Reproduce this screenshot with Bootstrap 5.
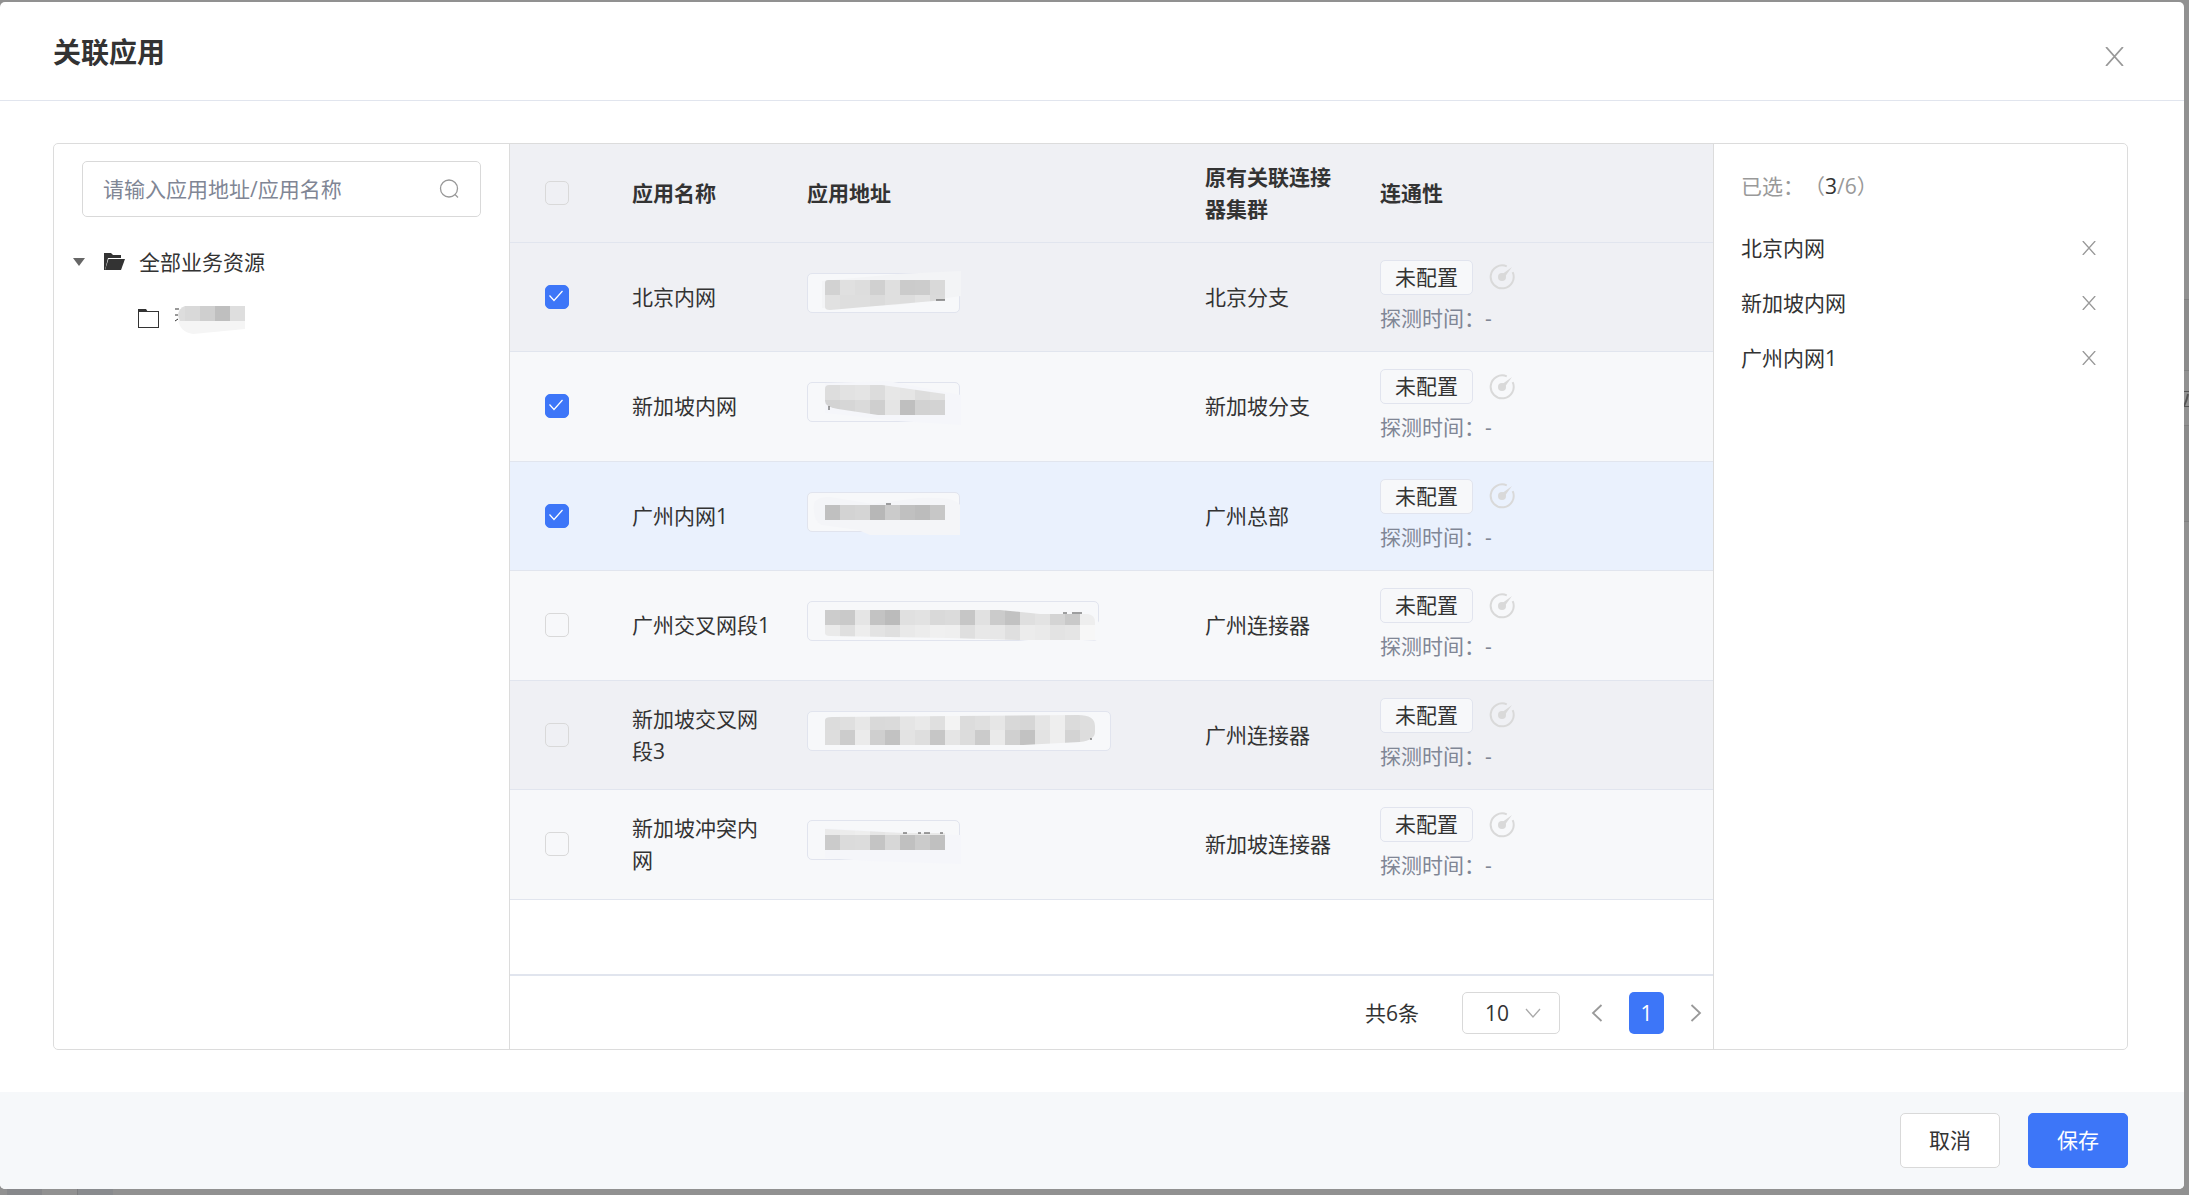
<!DOCTYPE html>
<html lang="zh-CN">
<head>
<meta charset="utf-8">
<meta name="viewport" content="width=device-width, initial-scale=1">
<title>关联应用</title>
<link href="https://cdn.jsdelivr.net/npm/bootstrap@5.3.0/dist/css/bootstrap.min.css" rel="stylesheet">
<style>
  :root { --line: #dcdcdc; --rule: #e1e5ee; --brand: #3d76f8; --ink: #333; --muted: #808695; --pale: #f7f8fa; }
  body { font-family: "Open Sans", "Noto Sans CJK SC", sans-serif; font-size: 21px; line-height: 32px; font-weight: 400; color: var(--ink); background: #919191; }
  .backdrop-foot { bottom: 0; left: 0; height: 6px; width: 100%; background: linear-gradient(90deg, transparent 7px, #87888b 7px 42px, transparent 42px 77px, #7d7d7f 77px 78px, #898b8e 78px 113px, transparent 113px); }
  .backdrop-side { top: 0; right: 0; width: 5px; height: 100%; background: linear-gradient(transparent 299px, #808080 299px 300px, #8c8c8c 300px 370px, #808080 370px 371px, transparent 371px 425px, #808080 425px 426px, #8b8b8b 426px 521px, #808080 521px 522px, transparent 522px); }
  .backdrop-side svg { display: block; margin-top: 391px; }
  .dialog-shell { position: relative; margin: 2px 5px 6px 0; min-height: calc(100vh - 8px); background: #fff; border-radius: 5px; overflow: hidden; }
  .dialog-head { height: 99px; padding: 2px 60px 0 53px; border-bottom: 1px solid var(--rule); }
  .dialog-title { font-size: 28px; line-height: 40px; font-weight: 700; }
  .bare-btn { border: 0; background: none; padding: 0; display: flex; color: #999; }
  .close-btn { padding-top: 9px; }
  .dialog-main { padding: 42px 56px 42px 53px; }
  .picker { border: 1px solid var(--line); border-radius: 5px; }
  .tree-pane { width: 456px; border-right: 1px solid var(--line); padding: 17px 28px 0 28px; }
  .search-box { height: 56px; border: 1px solid #d9d9d9; border-radius: 5px; padding: 0 21px 0 20px; color: #999; }
  .search-box input { border: 0; outline: 0; padding: 0; min-width: 0; color: var(--ink); background: none; }
  .search-box input::placeholder { color: var(--muted); opacity: 1; }
  .tree-row { height: 56px; }
  .tree-list { margin: 17px 0 0 -9px; }
  .folder { margin: 0 13px 0 17px; }
  .app-table { table-layout: fixed; width: 100%; }
  .app-table th, .app-table td { padding: 0 16px; border-bottom: 1px solid var(--rule); vertical-align: middle; }
  .app-table th { height: 98px; background: #eff0f4; font-weight: 700; }
  .app-table td { height: 109px; background: var(--pale); }
  .app-table tr:nth-child(even) td { height: 110px; }
  .app-table .row-shade td { background: #eff0f4; }
  .app-table .row-active td { background: #eaf1fd; }
  .app-table th:first-child, .app-table td:first-child { padding-left: 35px; }
  .w-check { width: 106px; } .w-name, .w-cluster { width: 175px; } .w-addr { width: 398px; }
  .form-check-input.tick { width: 24px; height: 24px; margin: 0; display: block; border: 1px solid #d9d9d9; border-radius: 5px; background-color: transparent; }
  .form-check-input.tick:checked { background-color: var(--brand); border-color: var(--brand); background-size: 24px 24px; background-image: url("data:image/svg+xml,%3Csvg xmlns='http://www.w3.org/2000/svg' viewBox='0 0 24 24'%3E%3Cpath d='M4.500 10.500l4.500 5L17.500 6' fill='none' stroke='%23fff' stroke-width='1.200'/%3E%3C/svg%3E"); }
  .addr-chip { width: 153px; height: 40px; margin-bottom: 8px; border: 1px solid #e1e4ee; border-radius: 5px; background: var(--pale); }
  .addr-chip.long { width: 292px; } .addr-chip.longer { width: 304px; }
  .addr-chip svg { display: block; width: 100%; height: 38px; overflow: visible; }
  .state-chip { border: 1px solid #e1e4ee; border-radius: 5px; background: var(--pale); height: 35px; padding: 0 14px; }
  .probe-line { margin-top: 7px; color: var(--muted); }
  .table-foot { height: 75px; border-top: 2px solid var(--rule); padding: 1px 11px 0 0; }
  .size-select { width: 98px; height: 42px; margin: 0 31px 0 43px; border: 1px solid #d9d9d9; border-radius: 5px; padding: 0 0 0 22px; appearance: none; color: var(--ink); background: #fff url("data:image/svg+xml,%3Csvg xmlns='http://www.w3.org/2000/svg' viewBox='0 0 16 16'%3E%3Cpath d='M1 4l7 8 7-8' fill='none' stroke='%23aaa' stroke-width='1.300'/%3E%3C/svg%3E") no-repeat right 18px center / 16px 16px; }
  .pager { gap: 26px; }
  .page-now { width: 35px; height: 42px; border: 0; border-radius: 5px; background: var(--brand); color: #fff; padding: 0; }
  .picked-pane { width: 414px; border-left: 1px solid var(--line); padding: 26px 31px 0 27px; }
  .picked-head { color: #999; } .picked-head b { color: var(--ink); font-weight: 400; }
  .picked-list { margin-top: 18px; }
  .picked-row { height: 55px; }
  .dialog-foot { height: 97px; background: #f6f8fa; padding: 0 56px 0 0; gap: 28px; }
  .btn.act { width: 100px; height: 55px; font-size: 21px; border-radius: 5px; padding: 0; --bs-btn-border-color: #d9d9d9; --bs-btn-bg: #fff; --bs-btn-color: #333; }
  .btn.act.save { --bs-btn-border-color: #3d76f8; --bs-btn-bg: #3d76f8; --bs-btn-color: #fff; }
</style>
<script src="https://cdn.jsdelivr.net/npm/bootstrap@5.3.0/dist/js/bootstrap.bundle.min.js"></script>
</head>
<body>
<svg width="0" height="0" class="position-absolute" aria-hidden="true">
  <symbol id="i-x" viewBox="0 0 18 18"><path d="M1 0l16 18M17 0L1 18" fill="none" stroke="currentColor" stroke-width="1.700"/></symbol>
  <symbol id="i-gauge" viewBox="0 0 26 26"><path d="M17.800 2.300A11.500 11.500 0 1 0 23.700 8.200" fill="none" stroke="#d9d9d9" stroke-width="2"/><circle cx="13" cy="13" r="4" fill="#d9d9d9"/><path d="M12 11L23 3 15 14z" fill="#d9d9d9"/></symbol>
</svg>
<div class="backdrop-foot position-absolute"></div>
<div class="backdrop-side position-absolute"><svg width="5" height="16" viewBox="0 0 5 16" fill="none" stroke="#555" aria-hidden="true"><path d="M0 .5h5M0 15.500h5"/><path d="M4 3Q3 9 0 15" stroke-width="2"/></svg></div>
<div class="dialog-shell d-flex flex-column">
  <header class="dialog-head d-flex align-items-center justify-content-between">
    <h1 class="dialog-title mb-0">关联应用</h1>
    <button type="button" class="bare-btn close-btn" aria-label="关闭"><svg width="19" height="19"><use href="#i-x"/></svg></button>
  </header>
  <main class="dialog-main flex-grow-1 d-flex">
    <div class="picker d-flex flex-grow-1">
      <aside class="tree-pane flex-shrink-0">
        <div class="search-box d-flex align-items-center">
          <input type="text" class="flex-grow-1" placeholder="请输入应用地址/应用名称" aria-label="搜索应用">
          <svg width="20" height="20" viewBox="0 0 20 20" fill="none" stroke="#999" stroke-width="1.300"><circle cx="10" cy="9.500" r="8.500"/><path d="M16 15.500l3 3"/></svg>
        </div>
        <div class="tree-list">
          <div class="tree-row d-flex align-items-center">
            <svg width="12" height="8" viewBox="0 0 12 8"><path d="M0 0h12L6 8z" fill="#666"/></svg>
            <svg class="folder" width="24" height="20" viewBox="0 0 24 20"><path d="M2 1h7l2 2h8v3H6L3 18H2z" fill="#333"/><path d="M6.500 7H23l-4 11H3z" fill="#333"/></svg>
            <span>全部业务资源</span>
          </div>
          <div class="tree-row d-flex align-items-center ps-5">
            <svg class="folder me-0" width="21" height="19" viewBox="0 0 21 19"><path d="M0 3V0h8l2 3z" fill="#333"/><rect x=".5" y="2.500" width="20" height="16" fill="none" stroke="#333"/></svg>
            <svg class="ms-3" width="72" height="32" viewBox="0 2 72 32" overflow="visible" role="img" aria-label="已隐藏名称"><path d="M0 9h4M0 15h3M0 21l3-2" stroke="#333" fill="none"/><path d="M4 9h66v20L18 34Q4 32 3 18z" fill="#f5f5f5"/><path d="M3 15Q4 8 10 6h5v15H5z" fill="#ddd"/><path d="M10 6h15v15H10z" fill="#d9d9d9"/><path d="M25 6h15v15H25z" fill="#cfcfcf"/><path d="M40 6h15v15H40z" fill="#bfbfbf"/><path d="M55 6h15v15H55z" fill="#dedede"/></svg>
          </div>
        </div>
      </aside>
      <section class="flex-grow-1 d-flex flex-column">
        <table class="app-table">
          <colgroup><col class="w-check"><col class="w-name"><col class="w-addr"><col class="w-cluster"><col></colgroup>
          <thead><tr>
            <th><input class="form-check-input tick" type="checkbox" aria-label="全选"></th>
            <th>应用名称</th><th>应用地址</th><th>原有关联连接器集群</th><th>连通性</th>
          </tr></thead>
          <tbody id="appRows"></tbody>
        </table>
        <div class="table-foot mt-auto d-flex align-items-center justify-content-end">
          <span>共6条</span>
          <select class="size-select" aria-label="每页条数"><option>10</option><option>20</option></select>
          <nav class="d-flex align-items-center pager" aria-label="分页">
            <button type="button" class="bare-btn" aria-label="上一页"><svg width="12" height="18" viewBox="0 0 12 18" fill="none" stroke="#999" stroke-width="1.800"><path d="M10.500 1L2 9l8.500 8"/></svg></button>
            <button type="button" class="page-now">1</button>
            <button type="button" class="bare-btn" aria-label="下一页"><svg width="12" height="18" viewBox="0 0 12 18" fill="none" stroke="#999" stroke-width="1.800"><path d="M1.500 1L10 9l-8.500 8"/></svg></button>
          </nav>
        </div>
      </section>
      <aside class="picked-pane flex-shrink-0">
        <div class="picked-head d-flex"><span>已选：</span><span>（<b>3</b>/6）</span></div>
        <ul class="list-unstyled mb-0 picked-list">
          <li class="picked-row d-flex align-items-center justify-content-between">北京内网<button type="button" class="bare-btn" aria-label="移除北京内网"><svg width="14" height="14"><use href="#i-x"/></svg></button></li>
          <li class="picked-row d-flex align-items-center justify-content-between">新加坡内网<button type="button" class="bare-btn" aria-label="移除新加坡内网"><svg width="14" height="14"><use href="#i-x"/></svg></button></li>
          <li class="picked-row d-flex align-items-center justify-content-between">广州内网1<button type="button" class="bare-btn" aria-label="移除广州内网1"><svg width="14" height="14"><use href="#i-x"/></svg></button></li>
        </ul>
      </aside>
    </div>
  </main>
  <footer class="dialog-foot d-flex align-items-center justify-content-end">
    <button type="button" class="btn act">取消</button>
    <button type="button" class="btn act save">保存</button>
  </footer>
</div>
<script>
  // Masked addresses: each tile row is [top offset, list of grey levels], clipped to an outline.
  const apps = [
    { name: '北京内网', cluster: '北京分支', on: true, shade: 'row-shade', halo: 'M14 7L90 0 153-3V22L90 31 14 34z', haloFill: '#f3f4f6',
      tiles: [[6, 'd2 e0 dd d0 df cb cc d9'], [21, 'e1 de de db df dd e2 da']], clip: 'M17 9Q17 6 20 6H137V26L22 36Q17 36 17 33z', specks: 'M128 26h9' },
    { name: '新加坡内网', cluster: '新加坡分支', on: true, shade: '', halo: 'M17 0L80-2 153 12V42L90 38 17 30z', haloFill: '#f5f6fa',
      tiles: [[2, 'dd e2 e4 dc e7 e5 dd e1'], [17, 'd3 d6 da cf e5 bf d2 d3']], clip: 'M17 6Q17 2 21 2H74L137 11V32H70L30 26Q17 24 17 18z', specks: 'M21 23v4' },
    { name: '广州内网1', cluster: '广州总部', on: true, shade: 'row-active', halo: 'M6 10Q10 3 22 4L65 11 110 5Q148 3 152 12V42H62L50 37 14 32Q4 28 6 10z', haloFill: '#f4f5f8',
      tiles: [[12, 'c0 d3 d5 b7 cb c0 bc c7']], clip: 'M17 12H137V27H17z', specks: 'M78 11h5' },
    { name: '广州交叉网段1', cluster: '广州连接器', on: false, shade: '', size: 'long', halo: 'M17 6H190L230 11 286 13 292 22V38L240 41 190 36 17 34z', haloFill: '#f7f8fa',
      tiles: [[8, 'cc c9 e5 c3 bb e0 e2 d9 db c6 e1 cb c2 df e3 d4 c9 ee'], [23, 'ea df ed e3 df e9 ec f0 ef df e8 e7 df ec ea e3 e5 f7']], clip: 'M17 8H192L232 12H280Q287 13 287 20V38H210L140 36 22 34Q17 34 17 31z', specks: 'M255 11h4M264 11h10' },
    { name: '新加坡交叉网段3', cluster: '广州连接器', on: false, shade: 'row-shade', size: 'longer', halo: 'M17 3L230 2 280 0 287 8V30L240 34 17 35z', haloFill: '#f7f8fa',
      tiles: [[3, 'dc df e7 d9 da e5 e9 df f3 dc df e6 d8 d6 e5 ee db de'], [18, 'dd cc eb cf c2 e3 de c6 e5 dc cb ea d0 c2 e3 ee d3 dd']], clip: 'M17 8Q17 5 24 5L270 3Q287 3 287 14V20Q287 28 272 30L215 33H17z', specks: 'M282 27h2' },
    { name: '新加坡冲突内网', cluster: '新加坡连接器', on: false, shade: '', halo: 'M17 7L95 12 153 14V43L60 40 17 37z', haloFill: '#f5f6fa',
      tiles: [[-1, 'ea ec ee e6 e9 ea e9 e9'], [14, 'cb db dc c4 d7 c0 cb c0']], clip: 'M17 8L95 12H137V29H17z', specks: 'M95 12h4M110 12h3M116 12h6M132 12h3' }
  ];
  document.getElementById('appRows').innerHTML = apps.map((a, n) => {
    const tiles = a.tiles.map(([y, levels]) => levels.split(' ').map((g, i) =>
      `<rect x="${17 + i * 15}" y="${y}" width="15" height="15" fill="#${g + g + g}"/>`).join('')).join('');
    return `<tr class="${a.shade}">
      <td><input class="form-check-input tick" type="checkbox" aria-label="选择${a.name}" ${a.on ? 'checked' : ''}></td>
      <td>${a.name}</td>
      <td><div class="addr-chip ${a.size || ''}"><svg role="img" aria-label="已隐藏地址"><clipPath id="mask${n}"><path d="${a.clip}"/></clipPath><path d="${a.halo}" fill="${a.haloFill}"/><g clip-path="url(#mask${n})" shape-rendering="crispEdges">${tiles}</g><path d="${a.specks}" stroke="#444" fill="none"/></svg></div></td>
      <td>${a.cluster}</td>
      <td><div class="d-flex align-items-center gap-3"><span class="state-chip">未配置</span><svg width="26" height="26"><use href="#i-gauge"/></svg></div><div class="probe-line">探测时间：-</div></td>
    </tr>`;
  }).join('');
</script>
</body>
</html>
